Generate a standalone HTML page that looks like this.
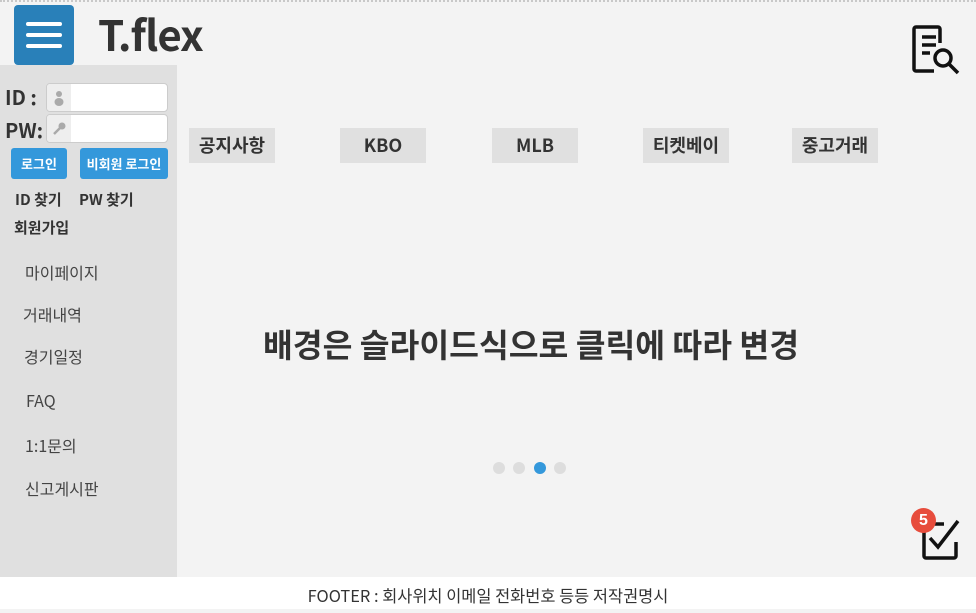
<!DOCTYPE html>
<html><head><meta charset="utf-8"><style>
*{margin:0;padding:0;box-sizing:border-box}
body{width:976px;height:609px;background:#f3f3f3;font-family:"Liberation Sans","Noto Sans CJK KR",sans-serif;position:relative;overflow:hidden;color:#333}
.top{position:absolute;left:0;top:0;width:976px;height:2px;border-top:2px dotted #c8c8c8}
.ham{position:absolute;left:14px;top:5px;width:60px;height:60px;background:#2980b9;border-radius:4px}
.ham i{position:absolute;left:12px;width:36px;height:4px;background:#fff;border-radius:2px}
.logo{position:absolute;left:98px;top:8px;font-size:42px;font-weight:bold;color:#333;letter-spacing:-1px;font-family:"Noto Sans CJK KR",sans-serif;line-height:52px}
.side{position:absolute;left:0;top:65px;width:177px;height:512px;background:#e0e0e0}
.lbl{position:absolute;font-weight:bold;font-size:20px;font-family:"Noto Sans CJK KR",sans-serif}
.inp{position:absolute;left:46px;width:122px;height:29px;background:#fff;border:1px solid #ccc;border-radius:4px}
.inp b{position:absolute;left:0;top:0;width:24px;height:27px;background:#eee;border-radius:3px 0 0 3px}
.btn{position:absolute;top:148px;height:31px;background:#3498db;color:#fff;border-radius:3px;font-size:13px;font-weight:bold;text-align:center;line-height:31px;font-family:"Noto Sans CJK KR",sans-serif}
.lk{position:absolute;font-size:15px;font-weight:bold;font-family:"Noto Sans CJK KR",sans-serif}
.mn{position:absolute;font-size:16px;color:#444;font-family:"Noto Sans CJK KR",sans-serif}
.tab{position:absolute;top:128px;width:86px;height:35px;background:#e0e0e0;font-size:18px;font-weight:bold;text-align:center;line-height:35px;font-family:"Noto Sans CJK KR",sans-serif}
.main{position:absolute;left:263px;top:320px;font-size:32.4px;font-weight:bold;font-family:"Noto Sans CJK KR",sans-serif;line-height:48px;white-space:nowrap}
.dot{position:absolute;top:462px;width:12px;height:12px;border-radius:50%;background:#ddd}
.foot{position:absolute;left:0;top:577px;width:976px;height:32px;background:#fff;text-align:center;font-size:16.4px;line-height:36px;color:#333;font-family:"Noto Sans CJK KR",sans-serif}
</style></head><body>
<div class="top"></div>
<div class="ham"><i style="top:17px"></i><i style="top:28px"></i><i style="top:39px"></i></div>
<div class="logo">T.flex</div>
<svg style="position:absolute;left:910px;top:25px" width="52" height="50" viewBox="0 0 52 50" fill="none" stroke="#111" stroke-width="3.5"><path d="M30 18V4a2 2 0 0 0-2-2H6a2 2 0 0 0-2 2v40a2 2 0 0 0 2 2h18"/><path d="M12 12h14M12 20h14M12 28h8"/><circle cx="33" cy="33" r="8"/><path d="M39 39l9 9"/></svg>
<div class="side"></div>
<div class="lbl" style="left:5px;top:82px">ID :</div>
<div class="lbl" style="left:5px;top:115px">PW:</div>
<div class="inp" style="top:83px"><b></b><svg style="position:absolute;left:6px;top:6px" width="12" height="16"><circle cx="6" cy="4" r="3" fill="#aaa"/><ellipse cx="6" cy="12" rx="4.5" ry="4" fill="#aaa"/></svg></div>
<div class="inp" style="top:114px"><b></b><svg style="position:absolute;left:5px;top:7px" width="14" height="14"><circle cx="10" cy="4" r="3.5" fill="#aaa"/><path d="M8 6L2 12" stroke="#aaa" stroke-width="2.5"/></svg></div>
<div class="btn" style="left:11px;width:56px">로그인</div>
<div class="btn" style="left:80px;width:88px">비회원 로그인</div>
<div class="lk" style="left:15px;top:189px">ID 찾기</div>
<div class="lk" style="left:79px;top:189px">PW 찾기</div>
<div class="lk" style="left:14px;top:217px">회원가입</div>
<div class="mn" style="left:25px;top:260px">마이페이지</div>
<div class="mn" style="left:23px;top:302px">거래내역</div>
<div class="mn" style="left:24px;top:344px">경기일정</div>
<div class="mn" style="left:26px;top:388px">FAQ</div>
<div class="mn" style="left:25px;top:433px">1:1문의</div>
<div class="mn" style="left:25px;top:476px">신고게시판</div>
<div class="tab" style="left:189px">공지사항</div>
<div class="tab" style="left:340px">KBO</div>
<div class="tab" style="left:492px">MLB</div>
<div class="tab" style="left:643px">티켓베이</div>
<div class="tab" style="left:792px">중고거래</div>
<div class="main">배경은 슬라이드식으로 클릭에 따라 변경</div>
<div class="dot" style="left:493px"></div>
<div class="dot" style="left:513px"></div>
<div class="dot" style="left:534px;background:#3498db"></div>
<div class="dot" style="left:554px"></div>
<svg style="position:absolute;left:920px;top:518px" width="44" height="42" fill="none" stroke="#111" stroke-width="3.5"><path d="M24 6H6a2 2 0 0 0-2 2v30a2 2 0 0 0 2 2h28a2 2 0 0 0 2-2V24"/><path d="M10 20l8 9L38 3"/></svg>
<div style="position:absolute;left:911px;top:508px;width:25px;height:25px;border-radius:50%;background:#e74c3c;color:#fff;font-weight:bold;font-size:16px;text-align:center;line-height:25px">5</div>
<div class="foot">FOOTER : 회사위치 이메일 전화번호 등등 저작권명시</div>
</body></html>
